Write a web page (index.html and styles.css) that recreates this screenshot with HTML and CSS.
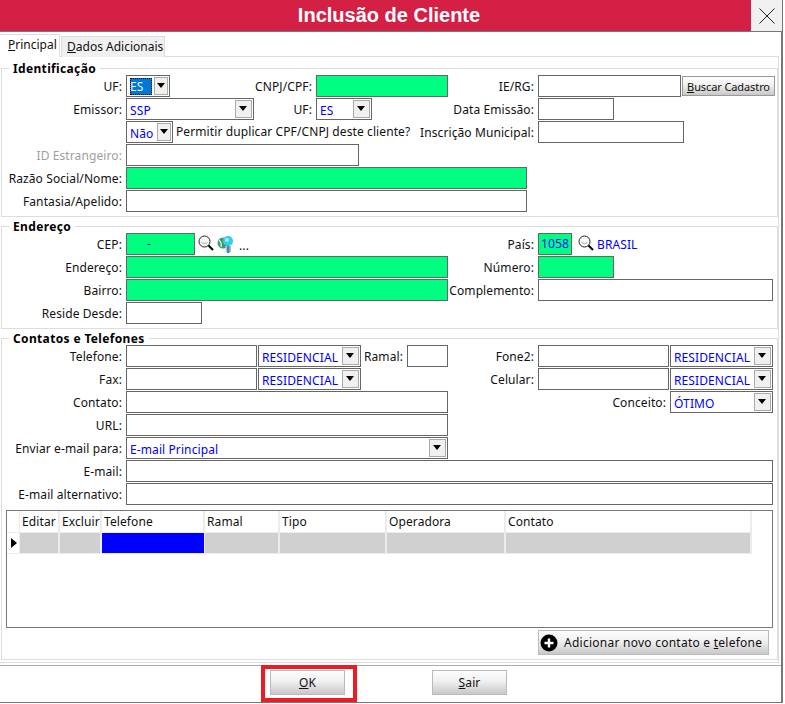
FILE: index.html
```html
<!DOCTYPE html>
<html lang="pt-BR">
<head>
<meta charset="utf-8">
<title>Inclusão de Cliente</title>
<link rel="stylesheet" href="styles.css">
</head>
<body>
<div class="window">
  <header class="titlebar">
    <h1 class="title">Inclusão de Cliente</h1>
    <button class="close" aria-label="Fechar">
      <svg width="16" height="16" viewBox="0 0 16 16"><path d="M0.5 0.5L15.5 15.5M15.5 0.5L0.5 15.5" stroke="#222" stroke-width="1" fill="none"/></svg>
    </button>
  </header>
  <nav class="tabs">
    <div class="tab tab-active"><u>P</u>rincipal</div>
    <div class="tab"><u>D</u>ados Adicionais</div>
  </nav>
  <main class="pane">
    <fieldset class="group">
      <legend>Identificação</legend>
      <div class="row">
        <label class="lab w122">UF:</label>
        <div class="sel w44 compact"><span class="val"><span class="picked">ES</span></span><i class="arrow"></i></div>
        <label class="lab w142">CNPJ/CPF:</label>
        <div class="inp req w132"></div>
        <label class="lab w86">IE/RG:</label>
        <div class="inp w143"></div>
        <button class="btn btn-find"><u>B</u>uscar Cadastro</button>
      </div>
      <div class="row">
        <label class="lab w122">Emissor:</label>
        <div class="sel w128"><span class="val">SSP</span><i class="arrow"></i></div>
        <label class="lab w58">UF:</label>
        <div class="sel w56"><span class="val">ES</span><i class="arrow"></i></div>
        <label class="lab w162">Data Emissão:</label>
        <div class="inp w76"></div>
      </div>
      <div class="row">
        <span class="spacer"></span>
        <div class="sel w47 compact"><span class="val">Não</span><i class="arrow"></i></div>
        <span class="note">Permitir duplicar CPF/CNPJ deste cliente?</span>
        <label class="lab w119">Inscrição Municipal:</label>
        <div class="inp w146"></div>
      </div>
      <div class="row">
        <label class="lab w122 disabled">ID Estrangeiro:</label>
        <div class="inp w233"></div>
      </div>
      <div class="row">
        <label class="lab w122">Razão Social/Nome:</label>
        <div class="inp req w401"></div>
      </div>
      <div class="row">
        <label class="lab w122">Fantasia/Apelido:</label>
        <div class="inp w401"></div>
      </div>
    </fieldset>

    <fieldset class="group">
      <legend>Endereço</legend>
      <div class="row">
        <label class="lab w122">CEP:</label>
        <div class="inp req w69 mask">-</div>
        <svg class="ico-search" width="16" height="17" viewBox="0 0 16 17"><circle cx="6.5" cy="6.5" r="5.5" fill="#f8f8f8" stroke="#222" stroke-width="1"/><path d="M3.5 7.5q3 2.500 6 0" stroke="#aaa" fill="none"/><path d="M10.5 10.5L15 15" stroke="#000" stroke-width="2"/></svg>
        <svg class="ico-map" width="17" height="18" viewBox="0 0 17 18"><circle cx="6" cy="8" r="5.5" fill="#3f9a6c"/><path d="M2 5q3 3 2 7M7 3q3 3 1 6" stroke="#d6e8e0" stroke-width="1.4" fill="none"/><path d="M8 11h6v6h-5z" fill="#a9c3d0"/><path d="M10 9h2.500v9h-2.500z" fill="#55889f"/><circle cx="11" cy="6" r="5" fill="#2fd0f0"/><circle cx="10" cy="5" r="2" fill="#a6eefc"/></svg>
        <span class="dots">...</span>
        <label class="lab w285">País:</label>
        <div class="inp req w34 code">1058</div>
        <svg class="ico-search ico-country" width="16" height="17" viewBox="0 0 16 17"><circle cx="6.5" cy="6.5" r="5.5" fill="#f8f8f8" stroke="#222" stroke-width="1"/><path d="M3.5 7.5q3 2.500 6 0" stroke="#aaa" fill="none"/><path d="M10.5 10.5L15 15" stroke="#000" stroke-width="2"/></svg>
        <span class="country">BRASIL</span>
      </div>
      <div class="row">
        <label class="lab w122">Endereço:</label>
        <div class="inp req w322"></div>
        <label class="lab w86">Número:</label>
        <div class="inp req w76"></div>
      </div>
      <div class="row">
        <label class="lab w122">Bairro:</label>
        <div class="inp req w322"></div>
        <label class="lab w86">Complemento:</label>
        <div class="inp w235"></div>
      </div>
      <div class="row">
        <label class="lab w122">Reside Desde:</label>
        <div class="inp w76"></div>
      </div>
    </fieldset>

    <fieldset class="group">
      <legend>Contatos e Telefones</legend>
      <div class="row">
        <label class="lab w122">Telefone:</label>
        <div class="inp w131"></div>
        <div class="sel w103"><span class="val">RESIDENCIAL</span><i class="arrow"></i></div>
        <label class="lab w42">Ramal:</label>
        <div class="inp w41"></div>
        <label class="lab w86">Fone2:</label>
        <div class="inp w131"></div>
        <div class="sel w103"><span class="val">RESIDENCIAL</span><i class="arrow"></i></div>
      </div>
      <div class="row">
        <label class="lab w122">Fax:</label>
        <div class="inp w131"></div>
        <div class="sel w103"><span class="val">RESIDENCIAL</span><i class="arrow"></i></div>
        <label class="lab w173">Celular:</label>
        <div class="inp w131"></div>
        <div class="sel w103"><span class="val">RESIDENCIAL</span><i class="arrow"></i></div>
      </div>
      <div class="row">
        <label class="lab w122">Contato:</label>
        <div class="inp w322"></div>
        <label class="lab w218">Conceito:</label>
        <div class="sel w103"><span class="val">ÓTIMO</span><i class="arrow"></i></div>
      </div>
      <div class="row">
        <label class="lab w122">URL:</label>
        <div class="inp w322"></div>
      </div>
      <div class="row">
        <label class="lab w122">Enviar e-mail para:</label>
        <div class="sel w322"><span class="val">E-mail Principal</span><i class="arrow"></i></div>
      </div>
      <div class="row">
        <label class="lab w122">E-mail:</label>
        <div class="inp w647"></div>
      </div>
      <div class="row">
        <label class="lab w122">E-mail alternativo:</label>
        <div class="inp w647"></div>
      </div>
      <section class="grid">
        <div class="gh gi"></div>
        <div class="gh">Editar</div>
        <div class="gh">Excluir</div>
        <div class="gh">Telefone</div>
        <div class="gh">Ramal</div>
        <div class="gh">Tipo</div>
        <div class="gh">Operadora</div>
        <div class="gh">Contato</div>
        <div class="gc gi"><i class="pointer"></i></div>
        <div class="gc"></div>
        <div class="gc"></div>
        <div class="gc gc-focus"></div>
        <div class="gc"></div>
        <div class="gc"></div>
        <div class="gc"></div>
        <div class="gc"></div>
      </section>
      <div class="actions">
        <button class="btn btn-add">
          <svg width="18" height="18" viewBox="0 0 18 18"><circle cx="9" cy="9" r="8.500" fill="#000"/><path d="M9 4.500v9M4.500 9h9" stroke="#fff" stroke-width="2.400"/></svg>
          <span>Adicionar novo contato e <u>t</u>elefone</span>
        </button>
      </div>
    </fieldset>
  </main>
  <footer class="footer">
    <button class="btn btn-main"><u>O</u>K</button>
    <button class="btn btn-main"><u>S</u>air</button>
    <div class="highlight"></div>
  </footer>
</div>
</body>
</html>
```
FILE: styles.css
```css
* { box-sizing: border-box; }
html, body { margin: 0; padding: 0; height: 704px; overflow: hidden; background: #fff; }
body { font-family: "Noto Sans", "DejaVu Sans", sans-serif; font-size: 12px; letter-spacing: 0.1px; color: #000; }

.window { width: 783px; height: 703px; border-right: 2px solid #777; display: flex; flex-direction: column; border-bottom: 1px solid #777; }

.titlebar { height: 32px; flex: none; display: flex; border-bottom: 1px solid #777; }
.title { flex: 1; margin: 0; background: #d42045; color: #fff; font: bold 20px/31px "Liberation Sans", Arial, sans-serif; letter-spacing: 0; text-align: center; padding-left: 27px; }
.close { width: 31px; border: 0; padding: 0; background: #f0f0f0; display: flex; align-items: center; justify-content: center; margin-right: -1px; }

.tabs { height: 25px; flex: none; display: flex; align-items: flex-end; margin-bottom: -1px; position: relative; z-index: 1; }
.tab { height: 21px; padding: 1px 0 0 5px; width: 104px; background: #f0f0f0; border: 1px solid #ddd; border-bottom: 0; line-height: 18px; margin-left: 1px; color: #111; white-space: nowrap; letter-spacing: 0; }
.tab-active { width: 60px; height: 23px; margin-left: 0; background: #fff; border-left: 0; border-bottom: 1px solid #fff; padding: 1px 0 0 8px; }

.pane { width: 779px; height: 607px; flex: none; border: 1px solid #ddd; border-left: 0; padding: 4px 0 0 1px; }

.group { margin: 0 0 2px; padding: 0 0 4px 0; border: 1px solid #ddd; width: 777px; min-width: 0; display: flex; flex-direction: column; gap: 1px; }
.group legend { margin-left: 7px; padding: 0 4px; font-weight: bold; font-size: 12px; letter-spacing: 0.35px; line-height: 16px; height: 14px; color: #000; white-space: nowrap; }

.row { height: 22px; display: flex; align-items: stretch; flex: none; white-space: nowrap; }
.lab { text-align: right; padding-right: 4px; line-height: 24px; flex: none; color: #111; }
.disabled { color: #a0a0a0; }
.spacer { width: 124px; flex: none; }

.inp, .sel { border: 1px solid #666; flex: none; background: #fff; color: #0000ff; }
.req { background: #00ff80; }
.mask { padding-left: 20px; line-height: 20px; }
.code { line-height: 19px; padding-left: 2px; }

.sel { display: flex; justify-content: space-between; align-items: center; padding: 0 1px 0 3px; }
.val { line-height: 20px; padding-top: 4px; }
.picked { display: block; width: 22px; height: 17px; line-height: 18px; margin: -3px 0 0 0; background: #0078d7; color: #e6f3ff; outline: 1px dotted #000; outline-offset: -1px; }
.arrow { width: 17px; height: 18px; background: #f0f0f0; border: 1px solid #aaa; position: relative; flex: none; }
.arrow::after { content: ""; position: absolute; left: 3px; top: 5px; border: 4px solid transparent; border-top: 5px solid #000; border-bottom: 0; }
.compact .arrow { width: 14px; }
.compact .arrow::after { left: 2px; }

.note { margin-left: 3px; width: 239px; line-height: 22px; flex: none; color: #111; }
.dots { margin-left: 5px; width: 11px; line-height: 26px; flex: none; color: #111; }
.ico-search { margin: 2px 0 0 3px; flex: none; }
.ico-map { margin: 2px 0 0 3px; flex: none; }
.ico-country { margin-left: 6px; }
.country { color: #0000ff; margin-left: 3px; line-height: 24px; }

.w34 { width: 34px; } .w41 { width: 41px; } .w42 { width: 46px; } .w44 { width: 44px; } .w47 { width: 47px; }
.w56 { width: 56px; } .w58 { width: 62px; } .w69 { width: 69px; } .w76 { width: 76px; } .w86 { width: 90px; }
.w103 { width: 103px; } .w119 { width: 123px; } .w122 { width: 124px; } .w128 { width: 128px; } .w131 { width: 131px; margin-right: 1px; }
.w132 { width: 132px; } .w142 { width: 146px; } .w143 { width: 143px; margin-right: 1px; } .w146 { width: 146px; }
.w162 { width: 166px; } .w173 { width: 177px; } .w218 { width: 222px; } .w233 { width: 233px; } .w235 { width: 235px; }
.w285 { width: 288px; } .w322 { width: 322px; } .w401 { width: 401px; } .w647 { width: 647px; }

.btn { font: inherit; letter-spacing: inherit; color: #111; background: linear-gradient(#fdfdfd, #f0f0f0 45%, #c8c8c8); border: 1px solid #bbb; padding: 0; }
.btn-find { width: 93px; height: 20px; margin-top: 1px; border-color: #999; font-size: 11px; letter-spacing: -0.1px; white-space: nowrap; }

.grid { margin: 4px 0 0 4px; width: 767px; height: 118px; flex: none; border: 1px solid #777; display: grid; grid-template-columns: 13px 40px 42px 103px 75px 107px 119px 246px; grid-template-rows: 22px 21px; align-content: start; }
.gh { background: #fff; border-right: 2px solid #ececec; border-bottom: 1px solid #ececec; padding: 1px 0 0 2px; line-height: 20px; color: #111; overflow: hidden; }
.gc { background: #d0d0d0; border-right: 2px solid #ececec; border-bottom: 1px solid #ececec; }
.gc-focus { background: #0000ff; border-right-width: 1px; }
.gi { background: #fff; border-right: 1px solid #ececec; padding: 0; }
.pointer { display: block; margin: 5px 0 0 4px; border: 5px solid transparent; border-left: 6px solid #000; border-right: 0; }

.actions { display: flex; justify-content: flex-end; margin: 1px 8px 0 0; }
.btn-add { width: 231px; height: 25px; display: flex; align-items: center; gap: 6px; padding: 0 0 0 1px; white-space: nowrap; letter-spacing: 0.25px; }

.footer { position: relative; flex: 1; margin-top: 2px; border-top: 1px solid #aaa; padding: 4px 0 0 270px; display: flex; gap: 87px; align-items: flex-start; }
.btn-main { width: 75px; height: 25px; }
.highlight { position: absolute; left: 261px; top: -1px; width: 96px; height: 37px; border: 4px solid #ed1c24; pointer-events: none; }
```
